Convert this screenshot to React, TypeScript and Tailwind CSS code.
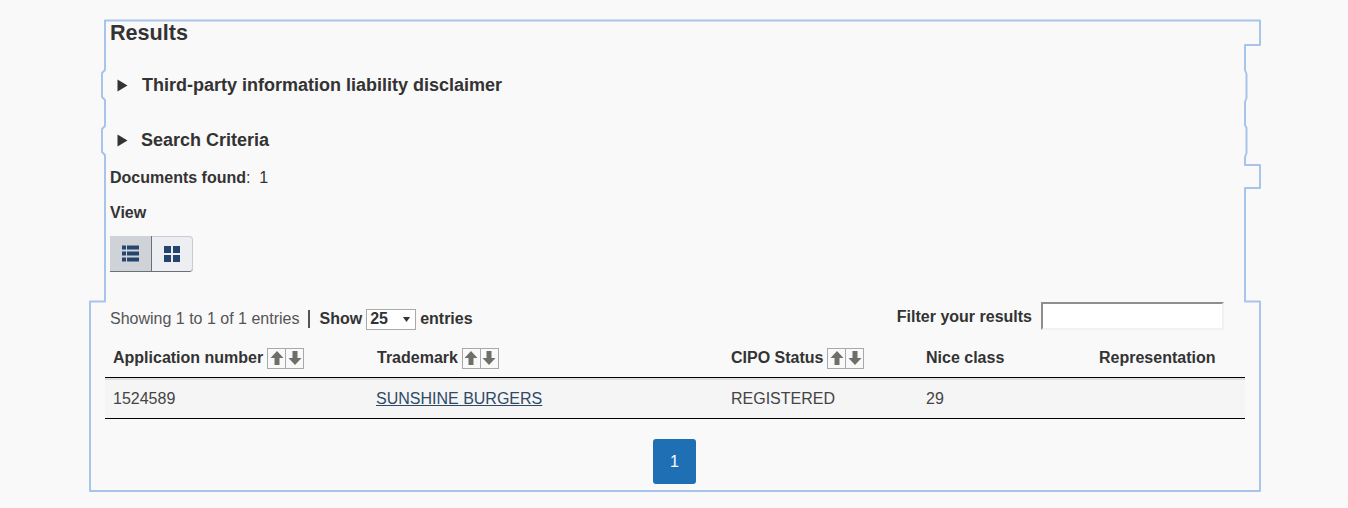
import React from "react";

function Triangle() {
  return (
    <svg width="11" height="13" viewBox="0 0 11 13" className="shrink-0">
      <path d="M0.5 0.5 L10.5 6.5 L0.5 12.5 Z" fill="#333333" />
    </svg>
  );
}

function ListIcon() {
  return (
    <svg width="17" height="17" viewBox="0 0 17 17" fill="#24466e">
      <rect x="0" y="0.5" width="4" height="4" />
      <rect x="5" y="0.5" width="12" height="4" />
      <rect x="0" y="6.5" width="4" height="4" />
      <rect x="5" y="6.5" width="12" height="4" />
      <rect x="0" y="12.5" width="4" height="4" />
      <rect x="5" y="12.5" width="12" height="4" />
    </svg>
  );
}

function GridIcon() {
  return (
    <svg width="16" height="16" viewBox="0 0 16 16" fill="#24466e">
      <rect x="0" y="0" width="7" height="7" />
      <rect x="9" y="0" width="7" height="7" />
      <rect x="0" y="9" width="7" height="7" />
      <rect x="9" y="9" width="7" height="7" />
    </svg>
  );
}

function SortArrows() {
  return (
    <span className="inline-flex h-[21px] w-[37px] border border-[#a9a9a9] ml-1">
      <span className="flex flex-1 items-center justify-center border-r border-[#a9a9a9]">
        <svg width="14" height="16" viewBox="0 0 14 16">
          <path d="M7 1 L13.5 8 H9.5 V15 H4.5 V8 H0.5 Z" fill="#6f6f6a" />
        </svg>
      </span>
      <span className="flex flex-1 items-center justify-center">
        <svg width="14" height="16" viewBox="0 0 14 16">
          <path d="M7 15 L13.5 8 H9.5 V1 H4.5 V8 H0.5 Z" fill="#6f6f6a" />
        </svg>
      </span>
    </span>
  );
}

function Disclosure({ label, className }: { label: string; className: string }) {
  return (
    <div className={`flex items-center font-bold text-[18px] leading-[24px] text-[#333] ${className}`}>
      <Triangle />
      <span>{label}</span>
    </div>
  );
}

const outline =
  "M105 20.5 H1260 V45 H1245 V70 L1246.5 74 V98 L1245 102 V125 L1246.5 128 V153 L1245 157 V165 H1260 V188 H1245 V301.5 H1260 V491 H90 V301.5 H105 V155 L102 152 V129 L105 126 V100 L102 97 V73 L105 70 V20.5 Z";

export default function App() {
  return (
    <div className="relative h-[508px] overflow-hidden bg-[#f9f9f9] font-['Liberation_Sans',Arial,sans-serif] text-[#333]">
      {/* hand-drawn selection outline over the content */}
      <svg className="absolute inset-0 pointer-events-none" width="1348" height="508">
        <path d={outline} fill="none" stroke="#a9c4ea" strokeWidth="2" strokeLinejoin="round" />
      </svg>

      <div className="ml-[105px] w-[1140px] pt-[20px]">
        <div className="pl-[5px]">
          <h1 className="text-[21.6px] leading-[26px] font-bold">Results</h1>

          <Disclosure label="Third-party information liability disclaimer" className="mt-[27px] pl-[7px] gap-[14px]" />
          <Disclosure label="Search Criteria" className="mt-[31px] pl-[7px] gap-[13px]" />

          <div className="mt-[15px] text-[16px] leading-[22px]">
            <span className="font-bold">Documents found</span>
            <span>:&nbsp;&nbsp;1</span>
          </div>

          <div className="mt-[13px] text-[16px] leading-[22px] font-bold">View</div>

          <div className="mt-[12px] flex h-[36px] w-[83px] border-b border-[#6b6f76] rounded-br-[4px]">
            <button className="flex w-[42px] items-center justify-center border-r border-[#6b6f76] bg-[#cfd2d7]">
              <ListIcon />
            </button>
            <button className="flex flex-1 items-center justify-center rounded-tr-[4px] rounded-br-[4px] border-r border-t border-[#c9ccd2] bg-[#eceef1]">
              <GridIcon />
            </button>
          </div>
        </div>

        <div className="mt-[30px] flex items-start justify-between pl-[5px] pr-[21px] h-[38px]">
          <div className="mt-[6px] flex items-center text-[16px] leading-[22px]">
            <span className="text-[#555]">Showing 1 to 1 of 1 entries</span>
            <span className="ml-[9px] mr-[9px] h-[18px] w-[2px] bg-[#555]" />
            <span className="font-bold">Show</span>
            <span className="ml-[4px] mr-[4px] flex h-[21px] w-[50px] items-center justify-between border border-[#aaa] bg-white pl-[3px] pr-[5px] font-bold">
              25
              <svg width="7" height="5" viewBox="0 0 7 5">
                <path d="M0 0 H7 L3.5 5 Z" fill="#333" />
              </svg>
            </span>
            <span className="font-bold">entries</span>
          </div>
          <div className="flex items-center">
            <span className="mr-[9px] pt-[2px] text-[16px] font-bold">Filter your results</span>
            <input className="h-[28px] w-[183px] border-2 border-[#f1f1f1] border-t-[#8f8f8f] border-l-[#8f8f8f] bg-white" />
          </div>
        </div>

        <table className="w-[1140px] table-fixed border-separate border-spacing-0 text-[16px]">
          <thead>
            <tr className="h-[38px] text-left">
              <th className="w-[264px] border-b border-black pb-px pl-2 font-bold">
                <span className="flex items-center">Application number<SortArrows /></span>
              </th>
              <th className="w-[354px] border-b border-black pb-px pl-2 font-bold">
                <span className="flex items-center">Trademark<SortArrows /></span>
              </th>
              <th className="w-[195px] border-b border-black pb-px pl-2 font-bold">
                <span className="flex items-center">CIPO Status<SortArrows /></span>
              </th>
              <th className="w-[173px] border-b border-black pb-px pl-2 font-bold">Nice class</th>
              <th className="w-[154px] border-b border-black pb-px pl-2 font-bold">Representation</th>
            </tr>
          </thead>
          <tbody>
            <tr className="h-[41px] bg-[#f5f5f5] text-[#444]">
              <td className="border-t-2 border-b border-t-[#dedede] border-b-black pl-2">1524589</td>
              <td className="border-t-2 border-b border-t-[#dedede] border-b-black pl-[7px]">
                <a href="#" className="text-[#2f4a66] underline">SUNSHINE BURGERS</a>
              </td>
              <td className="border-t-2 border-b border-t-[#dedede] border-b-black pl-2">REGISTERED</td>
              <td className="border-t-2 border-b border-t-[#dedede] border-b-black pl-2">29</td>
              <td className="border-t-2 border-b border-t-[#dedede] border-b-black pl-2" />
            </tr>
          </tbody>
        </table>

        <div className="mt-[20px] flex justify-center pr-px">
          <button className="h-[45px] w-[43px] rounded-[3px] bg-[#1f6fb5] text-[16px] text-white">1</button>
        </div>
      </div>
    </div>
  );
}
